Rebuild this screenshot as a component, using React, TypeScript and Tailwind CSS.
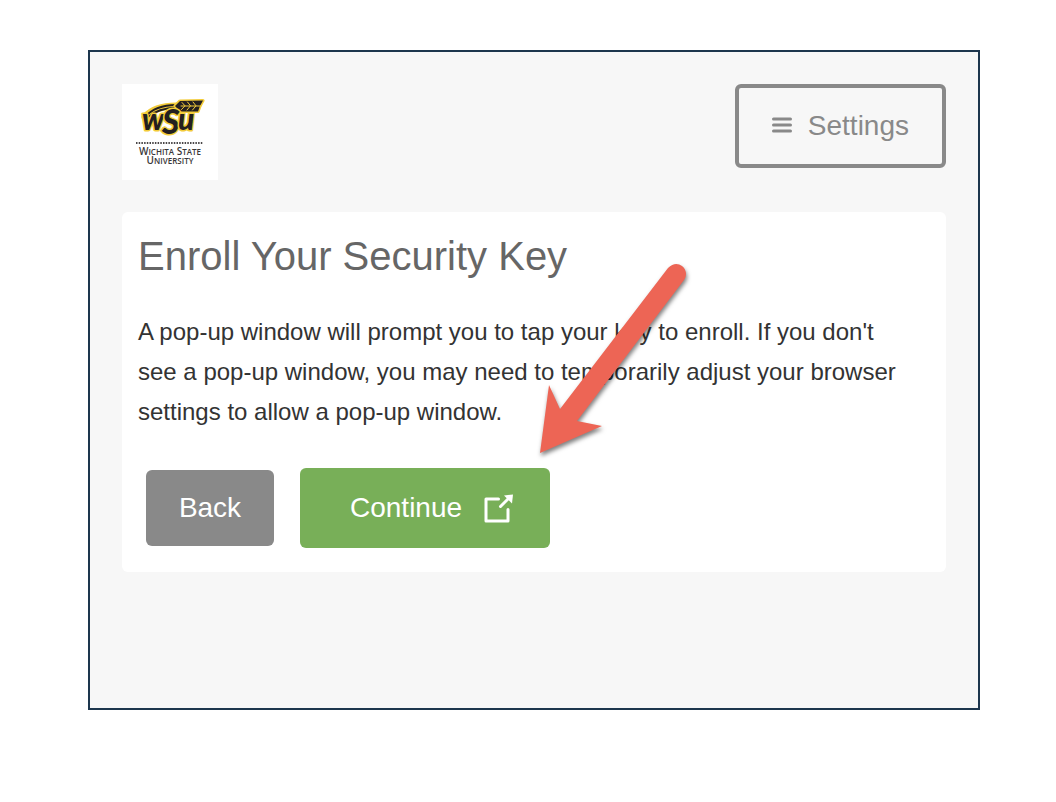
import React from "react";

function WsuLogo() {
  return (
    <svg
      viewBox="0 0 96 96"
      className="h-24 w-24 bg-white"
      role="img"
      aria-label="Wichita State University"
    >
      {/* wheat stem */}
      <g fill="none" strokeLinecap="round" strokeLinejoin="round">
        <path d="M23 33C30 25 40 22 54 22" stroke="#f3cc3a" strokeWidth="7" />
        <path d="M23 33C30 25 40 21 54 21" stroke="#231f20" strokeWidth="1.8" />
        <path d="M26 33C34 26 43 24 55 23.5" stroke="#231f20" strokeWidth="1.8" />
      </g>
      {/* wheat head */}
      <g strokeLinejoin="round" strokeLinecap="round">
        <path
          d="M53 22L58 17L81 16.5L78 22L76 27.5H58Z"
          fill="#231f20"
          stroke="#f3cc3a"
          strokeWidth="3.2"
        />
        <path d="M53 22L58 17L81 16.5L78 22L76 27.5H58Z" fill="#231f20" />
        <path
          d="M59 22H79M60 18.5L63 21.8L59.5 25.5M65.500 18L68.500 21.800L65 26M71 18L74 21.800L70.500 26"
          fill="none"
          stroke="#f3cc3a"
          strokeWidth="1"
        />
      </g>
      <text
        y="46"
        fontFamily="Lato, sans-serif"
        fontWeight="900"
        fontStyle="italic"
        fontSize="30"
        fill="#231f20"
        stroke="#f3cc3a"
        strokeWidth="3"
        strokeLinejoin="round"
        paintOrder="stroke"
      >
        <tspan x="20">w</tspan>
        <tspan x="40" y="50" fontSize="34">S</tspan>
        <tspan x="56" y="46">u</tspan>
      </text>
      <path d="M14 59H81" stroke="#4a4748" strokeWidth="2" strokeDasharray="1.5 1.2" />
      <text
        fontFamily="'Open Sans', sans-serif"
        fontWeight="600"
        fontSize="10"
        fill="#3a3738"
        textAnchor="middle"
      >
        <tspan x="48" y="71">W</tspan>
        <tspan fontSize="8">ICHITA</tspan> S<tspan fontSize="8">TATE</tspan>
        <tspan x="48" y="80">U</tspan>
        <tspan fontSize="8">NIVERSITY</tspan>
      </text>
    </svg>
  );
}

function MenuIcon() {
  return (
    <svg viewBox="0 0 20 18" className="h-[18px] w-5" aria-hidden="true">
      <path
        d="M1.500 2H18.500M1.500 8H18.500M1.500 14H18.500"
        stroke="currentColor"
        strokeWidth="3"
        strokeLinecap="round"
      />
    </svg>
  );
}

function PopupIcon() {
  return (
    <svg viewBox="0 0 30 30" className="h-[30px] w-[30px]" fill="none" aria-hidden="true">
      <path
        d="M14.500 6H2V28H24V16.500"
        stroke="currentColor"
        strokeWidth="3"
        strokeLinecap="round"
        strokeLinejoin="round"
      />
      <path d="M16.500 13.500L25 5" stroke="currentColor" strokeWidth="3" strokeLinecap="round" />
      <path d="M20 2.500L29 1.500L28 10.500Z" fill="currentColor" />
    </svg>
  );
}

function PointerArrow() {
  return (
    <svg
      viewBox="0 0 160 204"
      className="pointer-events-none absolute left-[412px] top-12 h-[204px] w-40 drop-shadow-[1px_3px_2px_rgba(0,0,0,0.5)]"
      aria-hidden="true"
    >
      <path
        d="M6 193L15 125L26 149L134 8C139 3 144 3 148 6C153 10 153 16 150 20L43 161L68 166Z"
        fill="#ed6555"
      />
    </svg>
  );
}

export default function App() {
  return (
    <div className="min-h-screen bg-white pt-[50px] pr-[76px] pl-[88px] font-['Liberation_Sans',Arial,sans-serif]">
      <div className="border-2 border-[#1d364d] bg-[#f7f7f7] px-8 pt-8 pb-34">
        <header className="flex items-start justify-between">
          <WsuLogo />
          <button
            type="button"
            className="flex items-center gap-4 rounded-md border-4 border-[#898989] px-[33px] py-5 text-[28px] leading-9 text-[#898989]"
          >
            <MenuIcon />
            Settings
          </button>
        </header>

        <main className="relative mt-8 rounded-md bg-white px-4 pt-5 pb-6">
          <h1 className="text-[40px] leading-12 text-[#666666]">Enroll Your Security Key</h1>
          <p className="mt-8 pr-5 text-2xl leading-10 text-[#333333]">
            A pop-up window will prompt you to tap your key to enroll. If you don't see a pop-up
            window, you may need to temporarily adjust your browser settings to allow a pop-up
            window.
          </p>

          <div className="mt-9 ml-2 flex items-center gap-[26px] text-[28px] leading-9 text-white">
            <button type="button" className="min-w-32 rounded-md bg-[#898989] px-8 py-5">
              Back
            </button>
            <button
              type="button"
              className="flex items-center gap-[22px] rounded-md bg-[#78af58] py-[22px] pr-9 pl-[50px]"
            >
              Continue
              <PopupIcon />
            </button>
          </div>

          <PointerArrow />
        </main>
      </div>
    </div>
  );
}
